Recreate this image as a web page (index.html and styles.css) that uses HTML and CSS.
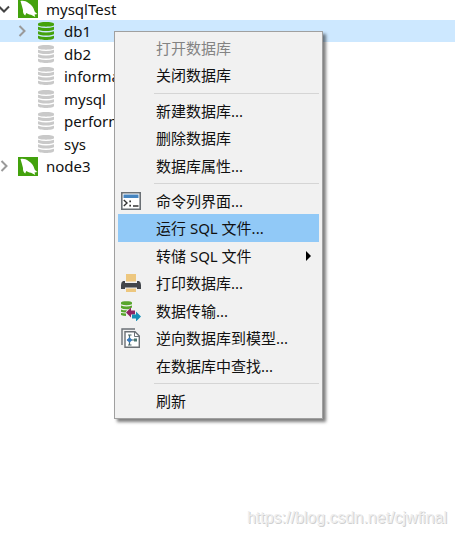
FILE: index.html
```html
<!DOCTYPE html>
<html lang="zh-CN">
<head>
    <meta charset="UTF-8">
    <meta name="viewport" content="width=device-width, initial-scale=1.0">
    <title>mysqlTest</title>
    <link rel="stylesheet" href="styles.css">
</head>
<body>

    <!-- Shared icons -->
    <svg class="icon-defs" width="0" height="0" aria-hidden="true">
        <symbol id="db" viewBox="0 0 16 18">
            <path d="M0 2C0-.6 16-.6 16 2V3C16 5.200 0 5.200 0 3Z"/>
            <path d="M0 4.800Q8 7.400 16 4.800V7.200C16 9.600 0 9.600 0 7.200Z"/>
            <path d="M0 9.300Q8 11.900 16 9.300V11.700C16 14.100 0 14.100 0 11.700Z"/>
            <path d="M0 13.800Q8 16.400 16 13.800V16C16 18.600 0 18.600 0 16Z"/>
        </symbol>
        <symbol id="mysql" viewBox="0 0 20 19">
            <path fill="#43a20d" d="M0 0H20V19H0Z"/>
            <path fill="#fff" d="M2.500 2C5.500 1.300 8 2.300 10.500 4C13.500 5.500 15.500 8.500 16.300 11.500C16.800 13.300 18 14.200 19.500 15L16.500 15.500L17.300 18L13 15.800C10.500 15.300 9.500 14.500 8.300 14L7.200 16.500C5.500 15.500 4.800 13.500 5 11C4.200 8 3.500 5 2.500 2Z"/>
        </symbol>
        <symbol id="chevron" viewBox="0 0 8 12">
            <path fill="none" stroke="currentColor" stroke-width="2" d="M1.500 1L6.500 6L1.500 11"/>
        </symbol>
    </svg>

    <ul class="tree">
        <li class="row">
            <svg class="chevron open"><use href="#chevron"/></svg>
            <svg class="server"><use href="#mysql"/></svg>
            <span>mysqlTest</span>
        </li>
        <li class="row child selected">
            <svg class="chevron"><use href="#chevron"/></svg>
            <svg class="db active"><use href="#db"/></svg>
            <span>db1</span>
        </li>
        <li class="row child">
            <span class="chevron"></span>
            <svg class="db"><use href="#db"/></svg>
            <span>db2</span>
        </li>
        <li class="row child">
            <span class="chevron"></span>
            <svg class="db"><use href="#db"/></svg>
            <span>informa</span>
        </li>
        <li class="row child">
            <span class="chevron"></span>
            <svg class="db"><use href="#db"/></svg>
            <span>mysql</span>
        </li>
        <li class="row child">
            <span class="chevron"></span>
            <svg class="db"><use href="#db"/></svg>
            <span>perform</span>
        </li>
        <li class="row child">
            <span class="chevron"></span>
            <svg class="db"><use href="#db"/></svg>
            <span>sys</span>
        </li>
        <li class="row">
            <svg class="chevron"><use href="#chevron"/></svg>
            <svg class="server"><use href="#mysql"/></svg>
            <span>node3</span>
        </li>
    </ul>

    <div class="menu">
        <div class="group">
            <button class="item" disabled>打开数据库</button>
            <button class="item">关闭数据库</button>
        </div>
        <div class="group">
            <button class="item">新建数据库...</button>
            <button class="item">删除数据库</button>
            <button class="item">数据库属性...</button>
        </div>
        <div class="group">
            <button class="item">
                <!-- console -->
                <svg class="icon" viewBox="0 0 20 18">
                    <path fill="#fff" stroke="#6b7075" stroke-width="1.600" d="M.8.800H19.200V17.200H.8Z"/>
                    <path fill="#4685c0" d="M2.500 2.500H17.500V6H2.500Z"/>
                    <path fill="none" stroke="#333" stroke-width="1.400" d="M2.800 8L6 11L2.800 14M12 14H17.500"/>
                    <path fill="#333" d="M8.300 8.500H10V10.200H8.300ZM8.300 12.800H10V14.500H8.300Z"/>
                </svg>
                命令列界面...
            </button>
            <button class="item current">运行 SQL 文件...</button>
            <button class="item">转储 SQL 文件
                <svg class="submenu" viewBox="0 0 5 10"><path d="M0 0L5 5L0 10Z"/></svg>
            </button>
            <button class="item">
                <!-- printer -->
                <svg class="icon" viewBox="0 0 20 18">
                    <path fill="#edc77f" d="M5 0H15V7.500H5Z"/>
                    <path fill="#42464b" d="M2 7H4V9H16V7H18Q20 8 20 11V15H16V13.500H4V15H0V11Q0 8 2 7Z"/>
                    <path fill="#edc77f" d="M5 14.500H15V18H5Z"/>
                </svg>
                打印数据库...
            </button>
            <button class="item">
                <!-- transfer -->
                <svg class="icon" viewBox="0 0 20 20">
                    <path fill="#58a52c" d="M0 1.500C0-.3 11-.3 11 1.500V3.200Q5.500 5.200 0 3.200ZM0 4.500Q5.500 6.500 11 4.500V6.500L7.500 8.200Q2 8.500 0 7ZM0 8.400Q3 9.500 6 9.200L4.500 11.500Q2 11.700 0 10.700ZM0 12L5 12.600V15Q2 15 0 14Z"/>
                    <path fill="#8e2463" d="M5 11.500L10 6.500V9.500H14V13.500H10V16.500Z"/>
                    <path fill="#168fb7" d="M20 15.500L15 10.500V13.500H11V17.500H15V20.500Z"/>
                </svg>
                数据传输...
            </button>
            <button class="item">
                <!-- reverse to model -->
                <svg class="icon" viewBox="0 0 20 20">
                    <path fill="none" stroke="#6b7075" stroke-width="1.400" d="M1 17V1H14"/>
                    <path fill="#fff" stroke="#6b7075" stroke-width="1.400" d="M4 3.700H14L18.300 8V19.300H4Z"/>
                    <path fill="none" stroke="#6b7075" d="M13.500 4V8.500H18"/>
                    <path fill="none" stroke="#4b6868" stroke-width="1.200" d="M6 12H15M8.500 7V17M7 7H10.500M7 17H10.500"/>
                    <path fill="#397abd" d="M5.700 12L8.500 9.200L11.300 12L8.500 14.800Z"/>
                    <path fill="#4b7770" d="M13 10.500H16V13.500H13Z"/>
                </svg>
                逆向数据库到模型...
            </button>
            <button class="item">在数据库中查找...</button>
        </div>
        <div class="group">
            <button class="item">刷新</button>
        </div>
    </div>

    <footer class="watermark">https://blog.csdn.net/cjwfinal</footer>

</body>
</html>
```
FILE: styles.css
```css
body {
    font-family: "Noto Sans", "Noto Sans CJK SC", sans-serif;
    font-size: 15px;
    color: #111;
    background-color: white;
    margin: 0;
    min-height: 100vh;
    display: flex;
    flex-direction: column;
    position: relative;
    overflow: hidden;
}
.icon-defs {
    position: absolute;
}
.tree {
    list-style: none;
    margin: -3px 0 0;
    padding: 0;
}
.row {
    display: flex;
    align-items: center;
    height: 23px;
    line-height: 22px;
    white-space: nowrap;
}
.row:nth-child(even) {
    height: 22px;
}
.child {
    padding-left: 18px;
}
.selected {
    background-color: #cde8ff;
}
.chevron {
    flex: none;
    width: 8px;
    height: 12px;
    color: #9a9a9a;
}
.chevron.open {
    transform: rotate(90deg);
    color: #444;
}
.server {
    flex: none;
    width: 20px;
    height: 19px;
    margin: 0 8px 0 10px;
}
.db {
    flex: none;
    width: 16px;
    height: 18px;
    margin: 0 10px 0 12px;
    fill: #c9c9c9;
}
.db.active {
    fill: #43a20d;
}
/* Context menu, opened over the tree */
.menu {
    position: absolute;
    top: 31px;
    left: 114px;
    width: 209px;
    box-sizing: border-box;
    padding: 2px 3px 4px;
    border: 1px solid #a0a0a0;
    background-color: #f1f1f1;
    box-shadow: 3px 3px 3px rgba(0, 0, 0, 0.5);
}
.group + .group::before {
    content: "";
    display: block;
    height: 1px;
    margin: 4px 0 3px 36px;
    background-color: #d5d5d5;
}
.item {
    display: flex;
    align-items: center;
    width: 100%;
    height: 27px;
    padding: 0 8px 0 38px;
    border: 0;
    background: none;
    font: inherit;
    line-height: 20px;
    color: #111;
    text-align: left;
    white-space: nowrap;
}
.item:nth-child(even) {
    height: 28px;
}
.item:disabled {
    color: #838383;
}
.item.current,
.item:hover {
    background-color: #91c9f7;
}
.icon {
    width: 20px;
    height: 20px;
    margin-left: -35px;
    margin-right: 15px;
}
.submenu {
    width: 5px;
    height: 10px;
    margin-left: auto;
}
.watermark {
    margin-top: auto;
    padding: 0 8px 8px;
    font-family: "Liberation Sans", Arial, sans-serif;
    font-size: 16px;
    line-height: 20px;
    text-align: right;
    color: #eee;
    text-shadow: 1px 1px 0 #d0d0d0;
}
```
